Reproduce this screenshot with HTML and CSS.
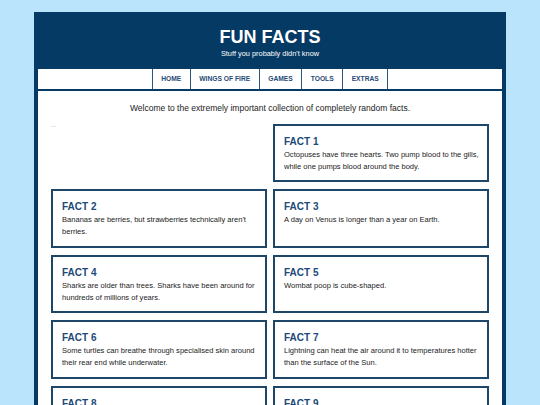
FILE: index.html
```html
<!DOCTYPE html>
<html lang="en">
<head>
<meta charset="utf-8">
<title>Fun Facts</title>
<link rel="stylesheet" href="styles.css">
</head>
<body>
<div class="page">
  <header class="masthead">
    <h1 class="title">FUN FACTS</h1>
    <p class="tagline">Stuff you probably didn't know</p>
  </header>
  <nav class="nav">
    <a class="nav-item" href="#">HOME</a>
    <a class="nav-item" href="#">WINGS OF FIRE</a>
    <a class="nav-item" href="#">GAMES</a>
    <a class="nav-item" href="#">TOOLS</a>
    <a class="nav-item" href="#">EXTRAS</a>
  </nav>
  <main class="content">
    <p class="intro">Welcome to the extremely important collection of completely random facts.</p>
    <div class="grid">
      <div class="note">...</div>
      <div class="card"><h3 class="card-title">FACT 1</h3><p class="card-text">Octopuses have three hearts. Two pump blood to the gills, while one pumps blood around the body.</p></div>
      <div class="card"><h3 class="card-title">FACT 2</h3><p class="card-text">Bananas are berries, but strawberries technically aren't berries.</p></div>
      <div class="card"><h3 class="card-title">FACT 3</h3><p class="card-text">A day on Venus is longer than a year on Earth.</p></div>
      <div class="card"><h3 class="card-title">FACT 4</h3><p class="card-text">Sharks are older than trees. Sharks have been around for hundreds of millions of years.</p></div>
      <div class="card"><h3 class="card-title">FACT 5</h3><p class="card-text">Wombat poop is cube-shaped.</p></div>
      <div class="card"><h3 class="card-title">FACT 6</h3><p class="card-text">Some turtles can breathe through specialised skin around their rear end while underwater.</p></div>
      <div class="card"><h3 class="card-title">FACT 7</h3><p class="card-text">Lightning can heat the air around it to temperatures hotter than the surface of the Sun.</p></div>
      <div class="card"><h3 class="card-title">FACT 8</h3><p class="card-text">Honey never spoils. Edible honey has been found in ancient tombs.</p></div>
      <div class="card"><h3 class="card-title">FACT 9</h3><p class="card-text">A group of flamingos is called a flamboyance.</p></div>
    </div>
  </main>
</div>
</body>
</html>
```
FILE: styles.css
```css
html, body {
  margin: 0;
  padding: 0;
}
body {
  background: #b9e4fc;
  font-family: "Liberation Sans", Arial, sans-serif;
  color: #222;
}
.page {
  width: 464px;
  margin: 12px auto 0;
  border: 4px solid #053a64;
  border-bottom: 0;
  background: #fff;
}
.masthead {
  background: #053a64;
  color: #fff;
  text-align: center;
  padding: 10.5px 0 9.7px;
}
.title {
  margin: 0;
  font-size: 18px;
  line-height: 20px;
  font-weight: bold;
}
.tagline {
  margin: 2.8px 0 0;
  font-size: 7.4px;
  line-height: 10px;
}
.nav {
  display: flex;
  justify-content: center;
  height: 20px;
  background: #fff;
  border-bottom: 2.5px solid #053a64;
}
.nav-item {
  display: flex;
  align-items: center;
  padding: 0 8.5px;
  border-left: 1px solid #2b5681;
  color: #1f4a76;
  font-size: 6.7px;
  font-weight: bold;
  text-decoration: none;
}
.nav-item:last-child {
  border-right: 1px solid #2b5681;
}
.content {
  padding: 12px 13px 20px;
}
.intro {
  margin: 0 0 11px;
  text-align: center;
  font-size: 8.5px;
  line-height: 10px;
  color: #222;
}
.grid {
  display: grid;
  grid-template-columns: 1fr 1fr;
  column-gap: 6px;
  row-gap: 7px;
}
.note {
  font-size: 6px;
  line-height: 3px;
  color: #8a8a8a;
}
.card {
  border: 2px solid #1d4669;
  padding: 10px 7px 8px 9px;
}
.card-title {
  margin: 0 0 1px;
  font-size: 10px;
  line-height: 12px;
  font-weight: bold;
  color: #1d4a78;
}
.card-text {
  margin: 0;
  font-size: 7.55px;
  line-height: 11.7px;
  color: #222;
}
```
